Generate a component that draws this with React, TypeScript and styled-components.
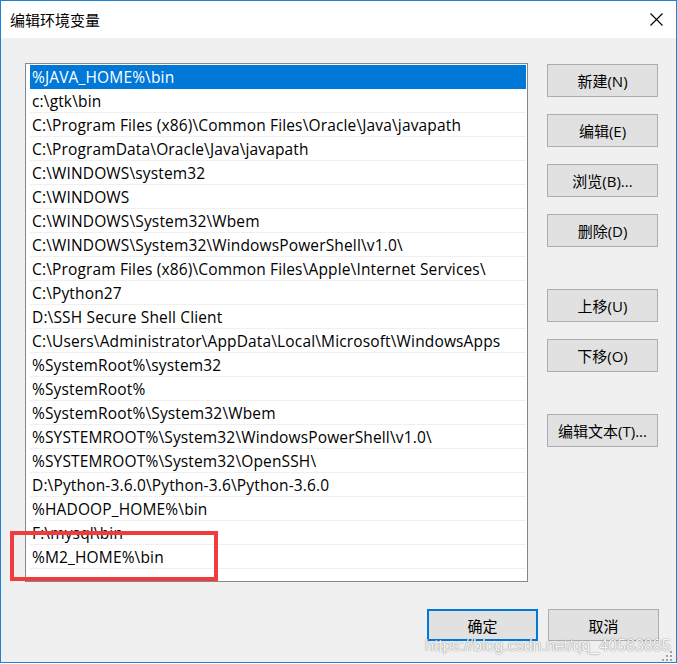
import React from "react";
import styled, { createGlobalStyle, css } from "styled-components";

const GlobalStyle = createGlobalStyle`
  html, body {
    margin: 0;
    padding: 0;
    background: #ffffff;
  }
  * { box-sizing: border-box; }
`;

const UI_FONT = `"Open Sans", "Noto Sans CJK SC", sans-serif`;

const Window = styled.div`
  position: relative;
  width: 677px;
  height: 663px;
  border: 1px solid #1883d7;
  background: #f0f0f0;
  display: flex;
  flex-direction: column;
  font-family: ${UI_FONT};
  color: #000;
`;

const TitleBar = styled.div`
  height: 37px;
  background: #ffffff;
  display: flex;
  align-items: center;
  justify-content: space-between;
  padding: 0 13px 0 9px;
`;

const Title = styled.div`
  font-family: "Noto Sans CJK SC", sans-serif;
  font-size: 15px;
  line-height: 1;
`;

const CloseIcon = styled.svg`
  width: 13px;
  height: 13px;
  display: block;
`;

const Body = styled.div`
  flex: 1;
  display: flex;
  flex-direction: column;
  padding: 25px 17px 0 24px;
`;

const MainRow = styled.div`
  display: flex;
  gap: 19px;
  align-items: flex-start;
`;

const ListBox = styled.div`
  width: 503px;
  height: 519px;
  background: #ffffff;
  border: 1px solid #828790;
  padding: 1px 1px 0 4px;
  overflow: hidden;
`;

const Row = styled.div<{ $selected?: boolean }>`
  height: 24px;
  display: flex;
  align-items: center;
  padding-left: 2px;
  font-size: 15.5px;
  letter-spacing: 0.15px;
  white-space: nowrap;
  border-bottom: 1px solid #f0f0f0;
  ${(p) =>
    p.$selected &&
    css`
      background: #0078d7;
      color: #ffffff;
      border-bottom-color: #0078d7;
    `}
`;

const ButtonColumn = styled.div`
  display: flex;
  flex-direction: column;
  gap: 42px;
  margin-top: 1px;
`;

const ButtonGroup = styled.div`
  display: flex;
  flex-direction: column;
  gap: 17px;
`;

const Button = styled.button<{ $default?: boolean; $h?: number }>`
  width: 111px;
  height: ${(p) => p.$h ?? 33}px;
  background: #e1e1e1;
  border: 1px solid #adadad;
  margin: 0;
  padding: 0;
  font-family: ${UI_FONT};
  font-size: 15px;
  color: #000;
  display: flex;
  align-items: center;
  justify-content: center;
  ${(p) =>
    p.$default &&
    css`
      border: 2px solid #0078d7;
    `}
`;

const Footer = styled.div`
  display: flex;
  justify-content: flex-end;
  gap: 10px;
  margin-top: 27px;
`;

const Highlight = styled.div`
  position: absolute;
  left: 9px;
  top: 530px;
  width: 208px;
  height: 50px;
  border: 4px solid #f03c3c;
  pointer-events: none;
`;

const Watermark = styled.div`
  position: absolute;
  left: 424px;
  top: 636px;
  font-family: "Liberation Sans", Arial, sans-serif;
  font-size: 16px;
  line-height: 18px;
  color: rgba(255, 255, 255, 0.95);
  text-shadow: 0 0 1px rgba(0, 0, 0, 0.45), 0 0 2px rgba(0, 0, 0, 0.2);
  white-space: nowrap;
  pointer-events: none;
`;

const Grip = styled.svg`
  position: absolute;
  right: 4px;
  bottom: 1px;
  width: 10px;
  height: 10px;
`;

const paths = [
  "%JAVA_HOME%\\bin",
  "c:\\gtk\\bin",
  "C:\\Program Files (x86)\\Common Files\\Oracle\\Java\\javapath",
  "C:\\ProgramData\\Oracle\\Java\\javapath",
  "C:\\WINDOWS\\system32",
  "C:\\WINDOWS",
  "C:\\WINDOWS\\System32\\Wbem",
  "C:\\WINDOWS\\System32\\WindowsPowerShell\\v1.0\\",
  "C:\\Program Files (x86)\\Common Files\\Apple\\Internet Services\\",
  "C:\\Python27",
  "D:\\SSH Secure Shell Client",
  "C:\\Users\\Administrator\\AppData\\Local\\Microsoft\\WindowsApps",
  "%SystemRoot%\\system32",
  "%SystemRoot%",
  "%SystemRoot%\\System32\\Wbem",
  "%SYSTEMROOT%\\System32\\WindowsPowerShell\\v1.0\\",
  "%SYSTEMROOT%\\System32\\OpenSSH\\",
  "D:\\Python-3.6.0\\Python-3.6\\Python-3.6.0",
  "%HADOOP_HOME%\\bin",
  "F:\\mysql\\bin",
  "%M2_HOME%\\bin",
];

export default function App() {
  return (
    <>
      <GlobalStyle />
      <Window>
        <TitleBar>
          <Title>编辑环境变量</Title>
          <CloseIcon viewBox="0 0 13 13">
            <path d="M0.5 0.5 L12.5 12.5 M12.5 0.5 L0.5 12.5" stroke="#000" strokeWidth="1.1" fill="none" />
          </CloseIcon>
        </TitleBar>
        <Body>
          <MainRow>
            <ListBox>
              {paths.map((p, i) => (
                <Row key={i} $selected={i === 0}>
                  {p}
                </Row>
              ))}
            </ListBox>
            <ButtonColumn>
              <ButtonGroup>
                <Button>新建(N)</Button>
                <Button>编辑(E)</Button>
                <Button>浏览(B)...</Button>
                <Button>删除(D)</Button>
              </ButtonGroup>
              <ButtonGroup>
                <Button>上移(U)</Button>
                <Button>下移(O)</Button>
              </ButtonGroup>
              <ButtonGroup>
                <Button>编辑文本(T)...</Button>
              </ButtonGroup>
            </ButtonColumn>
          </MainRow>
          <Footer>
            <Button $default $h={32}>确定</Button>
            <Button $h={32}>取消</Button>
          </Footer>
        </Body>
        <Highlight />
        <Watermark>https://blog.csdn.net/qq_40583885</Watermark>
        <Grip viewBox="0 0 10 10">
          <rect x="8" y="0" width="2" height="2" fill="#a0a0a0" />
          <rect x="4" y="4" width="2" height="2" fill="#a0a0a0" />
          <rect x="8" y="4" width="2" height="2" fill="#a0a0a0" />
          <rect x="0" y="8" width="2" height="2" fill="#a0a0a0" />
          <rect x="4" y="8" width="2" height="2" fill="#a0a0a0" />
          <rect x="8" y="8" width="2" height="2" fill="#a0a0a0" />
        </Grip>
      </Window>
    </>
  );
}
